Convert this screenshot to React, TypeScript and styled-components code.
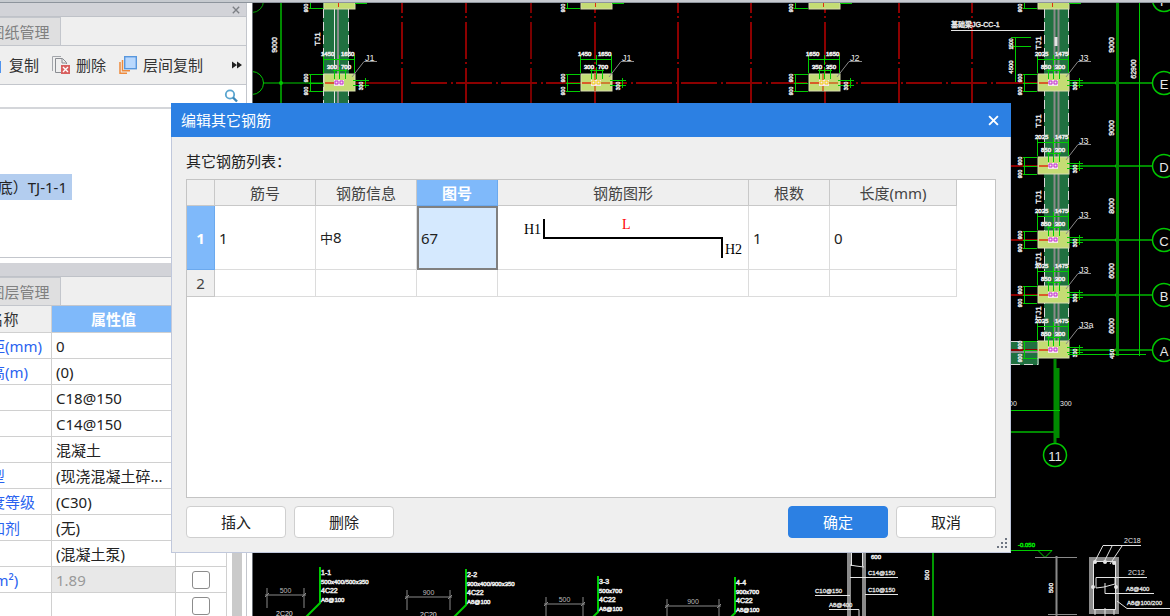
import React from "react";
import styled, { createGlobalStyle } from "styled-components";

const GlobalStyle = createGlobalStyle`
  *, *::before, *::after { box-sizing: border-box; }
  body {
    margin: 0;
    background: #000;
    color: #222;
    font-family: "Noto Sans", "Noto Sans CJK SC", sans-serif;
    font-size: 15px;
    line-height: 20px;
  }
  button, input { font: inherit; color: inherit; }
`;

/* ---------- page frame ---------- */

const Page = styled.div`
  position: relative;
  display: flex;
  flex-direction: column;
  height: 100vh;
  min-height: 560px;
  overflow: hidden;
`;

const TopEdge = styled.div`
  flex: none;
  height: 3px;
  background: #c6cacf;
  border-bottom: 1px solid #8d949c;
`;

const Workspace = styled.div`
  flex: 1;
  display: flex;
  min-height: 0;
`;

const Sidebar = styled.aside`
  flex: none;
  width: 253px;
  padding-right: 5px;
  background: #fff;
  border-right: 1px solid #6b6f75;
  display: flex;
  flex-direction: column;
  overflow: hidden;
`;

const CanvasArea = styled.main`
  flex: 1;
  min-width: 0;
  background: #000;
`;

/* ---------- side panels ---------- */

const Panel = styled.section<{ $fill?: boolean }>`
  display: flex;
  flex-direction: column;
  flex: ${(p) => (p.$fill ? "1" : "none")};
  min-height: 0;
  border-right: 1px solid #c3c6cc;
  overflow: hidden;
`;

const PanelTitle = styled.div`
  flex: none;
  height: 14px;
  display: flex;
  align-items: center;
  justify-content: flex-end;
  padding-right: 6px;
  background: #d2d3d8;
  border-bottom: 1px solid #bfc2c8;
`;

const PlainButton = styled.button`
  display: flex;
  align-items: center;
  padding: 0;
  border: 0;
  background: none;
`;

const TabRow = styled.div`
  flex: none;
  height: 29px;
  background: #efefef;
  border-bottom: 1px solid #c3c6cc;
`;

const Tab = styled.button`
  display: block;
  width: 82px;
  height: 28px;
  margin-left: -21px;
  padding: 0;
  border: 1px solid #c3c6cc;
  border-width: 1px 1px 0 0;
  background: #dfdfe0;
  color: #808080;
`;

const ToolRow = styled.div`
  flex: none;
  height: 39px;
  display: flex;
  align-items: center;
  background: #efefef;
  border-bottom: 1px solid #c3c6cc;
`;

const Tool = styled(PlainButton)`
  gap: 6px;
  margin-right: 13px;
  color: #333;
  white-space: nowrap;
`;

const CopyTool = styled(Tool)`
  margin-left: -15px;
`;

const MoreTool = styled(PlainButton)`
  margin-left: auto;
  padding-right: 4px;
`;

const SearchRow = styled.label`
  flex: none;
  height: 24px;
  display: flex;
  align-items: center;
  padding-right: 8px;
  border-bottom: 2px solid #d4d6da;
`;

const SearchInput = styled.input`
  flex: 1;
  min-width: 0;
  height: 20px;
  border: 0;
  outline: 0;
  background: none;
`;

const Tree = styled.div`
  height: 149px;
  padding-top: 65px;
  border-bottom: 1px solid #c3c6cc;
`;

const TreeItem = styled.button`
  display: flex;
  justify-content: flex-end;
  width: 72px;
  height: 26px;
  padding: 3px 5px;
  border: 0;
  background: #b3cdef;
  white-space: nowrap;
  overflow: hidden;
`;

const PanelGap = styled.div`
  flex: none;
  height: 5px;
  background: #fff;
  border-right: 1px solid #c3c6cc;
`;

const PropertyArea = styled.div`
  flex: 1;
  min-height: 0;
  display: flex;
  justify-content: space-between;
  overflow: hidden;
`;

const PropertyTable = styled.table`
  flex: none;
  align-self: flex-start;
  width: 301px;
  margin-left: -74px;
  table-layout: fixed;
  border-collapse: separate;
  border-spacing: 0;
`;

const PropHead = styled.th<{ $active?: boolean }>`
  height: 27px;
  padding: 0;
  border: 1px solid #d0d0d0;
  border-width: 0 1px 1px 0;
  font-weight: ${(p) => (p.$active ? 700 : 400)};
  color: ${(p) => (p.$active ? "#fff" : "#333")};
  background: ${(p) => (p.$active ? "#7fb9fa" : "#efefef")};
`;

const PropCell = styled.td<{ $tone?: "name" | "muted" }>`
  height: 26px;
  padding: 0 4px;
  border: 1px solid #d0d0d0;
  border-width: 0 1px 1px 0;
  white-space: nowrap;
  overflow: hidden;
  text-overflow: ellipsis;
  color: ${(p) => (p.$tone === "name" ? "#2a63f0" : p.$tone === "muted" ? "#999" : "#222")};
  background: ${(p) => (p.$tone === "muted" ? "#e8e8e8" : "#fff")};
`;

const CheckCell = styled(PropCell)`
  text-align: center;
`;

const Tick = styled.input`
  appearance: none;
  display: block;
  width: 18px;
  height: 18px;
  margin: 0 auto;
  border: 1px solid #8c8c8c;
  border-radius: 3px;
  background: #fff;
`;

const ScrollTrack = styled.div`
  width: 10px;
  margin-right: 4px;
  background: #cacaca;
`;

/* ---------- dialog ---------- */

const Dialog = styled.section`
  position: absolute;
  top: 103px;
  left: 171px;
  right: 159px;
  background: #efefef;
`;

const DialogTitle = styled.header`
  height: 34px;
  display: flex;
  align-items: center;
  justify-content: space-between;
  padding: 0 12px 0 10px;
  background: #2c80e3;
  color: #fff;
`;

const TitleText = styled.h1`
  margin: 0;
  font-size: 15px;
  font-weight: 400;
`;

const DialogBody = styled.div`
  padding: 14px;
  border: 1px solid #c0c8dc;
  border-top: 0;
`;

const ListLabel = styled.h2`
  margin: 0 0 8px;
  font-size: 15px;
  font-weight: 400;
`;

const GridFrame = styled.div`
  min-height: 319px;
  padding-right: 38px;
  background: #fff;
  border: 1px solid #c4c4c4;
`;

const Grid = styled.table`
  width: 100%;
  table-layout: fixed;
  border-collapse: separate;
  border-spacing: 0;
`;

const HeadCell = styled.th<{ $active?: boolean }>`
  height: 26px;
  padding: 0;
  border: 1px solid ${(p) => (p.$active ? "#6ba9ee" : "#c8c8c8")};
  border-width: 0 1px 1px 0;
  font-weight: ${(p) => (p.$active ? 700 : 400)};
  color: ${(p) => (p.$active ? "#fff" : "#444")};
  background: ${(p) => (p.$active ? "#7fb9fa" : "#efefef")};
`;

const Row = styled.tr<{ $tall?: boolean }>`
  height: ${(p) => (p.$tall ? 64 : 27)}px;
`;

const Cell = styled.td<{ $selected?: boolean }>`
  padding: 0 4px;
  border: 1px solid #dcdcdc;
  border-width: 0 1px 1px 0;
  ${(p) => p.$selected && "background: #d5e9fe; outline: 2px solid #808080; outline-offset: -2px;"}
`;

const ShapeCell = styled(Cell)`
  padding: 0;
`;

const BarGrade = styled.span`
  font-size: 13px;
`;

const Shape = styled.svg`
  display: block;
  width: 100%;
  height: 63px;
  font-family: "Liberation Serif", serif;
  font-size: 14px;
`;

const Footer = styled.footer`
  display: flex;
  gap: 8px;
  margin-top: 8px;
`;

const Action = styled.button<{ $primary?: boolean; $push?: boolean }>`
  width: 100px;
  height: 32px;
  padding: 0;
  margin-left: ${(p) => (p.$push ? "auto" : "0")};
  border: 1px solid ${(p) => (p.$primary ? "#2c80e3" : "#cfcfcf")};
  border-radius: 4px;
  background: ${(p) => (p.$primary ? "#2c80e3" : "#fff")};
  color: ${(p) => (p.$primary ? "#fff" : "#222")};
`;

const Grip = styled.svg`
  position: absolute;
  right: 3px;
  bottom: 3px;
`;

/* ---------- CAD drawing ---------- */

const Drawing = styled.svg`
  display: block;
  width: 100%;
  height: 100%;
  fill: none;
  font-family: "Liberation Sans Narrow", "Liberation Sans", "Noto Sans CJK SC", sans-serif;
`;

const Label = styled.text<{ $size?: number; $color?: string }>`
  fill: ${(p) => p.$color ?? "#e8e8e8"};
  font-size: ${(p) => p.$size ?? 6}px;
`;

const Green = styled.path<{ $dark?: boolean; $w?: number }>`
  stroke: ${(p) => (p.$dark ? "#008a00" : "#00cc00")};
  stroke-width: ${(p) => p.$w ?? 1};
`;

const White = styled.path<{ $w?: number; $dim?: boolean }>`
  stroke: ${(p) => (p.$dim ? "#8a8a8a" : "#e4e4e4")};
  stroke-width: ${(p) => p.$w ?? 1};
`;

const Axis = styled.path<{ $bright?: boolean }>`
  stroke: ${(p) => (p.$bright ? "#f00000" : "#8c0000")};
  stroke-width: ${(p) => (p.$bright ? 1 : 2)};
`;

function Turned({ x, y, children, size = 7 }: { x: number; y: number; children: string; size?: number }) {
  return (
    <Label $size={size} x={x} y={y} textAnchor="middle" stroke="#e8e8e8" strokeWidth="0.4" transform={`rotate(-90 ${x} ${y})`}>
      {children}
    </Label>
  );
}

type FootingProps = {
  x: number;
  y: number;
  name: string;
  spans: [string, string];
  inner: [string, string];
  core?: "purple" | "yellow";
};

function Footing({ x, y, name, spans, inner, core = "purple" }: FootingProps) {
  const side = core === "purple" ? "#c02ad0" : "#f2d000";
  return (
    <g>
      <rect x={x - 15} y={y - 9} width="31" height="17" fill="#c4dc74" stroke="#d8dcb0" />
      {core === "yellow" && <path d={`M${x - 1} ${y - 9}v17M${x + 4} ${y}h10`} stroke="#d06020" strokeWidth="1.5" />}
      <path d={`M${x - 14} ${y}h14`} stroke="#e03010" strokeWidth="1.5" />
      <rect x={x - 5} y={y - 3} width="10" height="6" fill="#f6e4ec" />
      <path d={`M${x - 4} ${y - 2}h3v3h-3zM${x + 1} ${y - 2}h3v3h-3z`} stroke={side} />
      <Green d={`M${x - 28.5} ${y - 9}v17M${x - 30} ${y - 8.5}h14M${x - 30} ${y + 0.5}h14M${x - 30} ${y + 8.5}h14`} />
      <Green d={`M${x - 15.5} ${y - 28}v18M${x + 0.5} ${y - 28}v10M${x + 15.5} ${y - 28}v18M${x - 15.5} ${y - 23.5}h31`} />
      <Green d={`M${x - 4.5} ${y - 14}v10M${x + 0.5} ${y - 16}v12M${x + 6.5} ${y - 14}v10M${x - 6} ${y - 12.5}h14`} />
      <Green d={`M${x + 14} ${y - 2.5}h16M${x + 14} ${y + 2.5}h16M${x + 26.5} ${y - 5}v10`} />
      <White $dim d={`M${x + 13} ${y - 6}l12 -15.5h13`} />
      <Label x={x - 18} y={y - 27} stroke="#e8e8e8" strokeWidth="0.6">{spans[0]}</Label>
      <Label x={x + 2} y={y - 27} stroke="#e8e8e8" strokeWidth="0.6">{spans[1]}</Label>
      <Label x={x - 12} y={y - 14} stroke="#e8e8e8" strokeWidth="0.6">{inner[0]}</Label>
      <Label x={x + 2} y={y - 14} stroke="#e8e8e8" strokeWidth="0.6">{inner[1]}</Label>
      <Turned x={x - 31} y={y - 5} size={5}>900</Turned>
      <Turned x={x - 31} y={y + 8} size={5}>900</Turned>
      <Turned x={x + 24} y={y + 3} size={5}>300</Turned>
      <Label $size={9} x={x + 26} y={y - 22}>{name}</Label>
    </g>
  );
}

function TopFooting({ x }: { x: number }) {
  return (
    <g>
      <rect x={x - 15} y="-6" width="31" height="15" fill="#c4dc74" stroke="#d8dcb0" />
      <path d={`M${x - 0.5} 3v4`} stroke="#e03010" />
      <Green d={`M${x - 28.5} 3v5.500M${x - 30} 8.500h14M${x + 16} 3.500h12`} />
      <Turned x={x - 31} y={8} size={5}>900</Turned>
    </g>
  );
}

function Bubble({ x, y, name }: { x: number; y: number; name: string }) {
  return (
    <g>
      <circle cx={x} cy={y} r="11.500" stroke="#00c800" strokeWidth="1.500" />
      <Label $size={13} x={x} y={y + 6} textAnchor="middle">{name}</Label>
    </g>
  );
}

function Section({ x, y, lines }: { x: number; y: number; lines: string[] }) {
  return (
    <g>
      <Green $w={2} d={`M${x} ${y}v36l-14 14`} />
      {lines.map((t, i) => (
        <Label key={i} $size={i % 2 === 0 ? 7 : 6} x={x + 1} y={y + 8 + i * 9} stroke="#e8e8e8" strokeWidth="0.5">{t}</Label>
      ))}
    </g>
  );
}

function Span({ x, y, width, text }: { x: number; y: number; width: number; text: string }) {
  return (
    <g>
      <White $dim d={`M${x - 2} ${y}h${width + 4}M${x} ${y - 7}v20M${x + width} ${y - 7}v20M${x - 2} ${y + 2}l4 -4M${x + width - 2} ${y + 2}l4 -4`} />
      <Label $size={7} $color="#bbb" x={x + width / 2} y={y - 2} textAnchor="middle">{text}</Label>
    </g>
  );
}

const axisLines = [402, 466, 531, 595, 678, 751, 825, 899, 972];
const gridRows = [
  { y: 83, name: "E" },
  { y: 166, name: "D" },
  { y: 240, name: "C" },
  { y: 295, name: "B" },
  { y: 350, name: "A" },
];

function CadDrawing() {
  return (
    <Drawing viewBox="253 3 917 613" preserveAspectRatio="xMinYMin slice" role="img" aria-label="CAD">
      {axisLines.map((x) => (
        <Axis key={x} $bright={x === 531} d={`M${x} -24V130`} strokeDasharray="37 3 2 4" />
      ))}
      <Axis d="M411 83H1040" strokeDasharray="36 4 2 3" />
      <Axis $bright d="M356 83H400" />

      {/* left axis and foundation strip */}
      <Green $dark $w={2} d="M281 3V110" />
      <Green d="M263 83H340" />
      <circle cx="281" cy="83" r="2" fill="#00c800" />
      <circle cx="252" cy="1" r="11.500" stroke="#00a000" />
      <circle cx="252" cy="83" r="11.500" stroke="#00c800" />
      <Turned x={277} y={45}>9000</Turned>
      <rect x="323" y="3" width="26" height="110" fill="#207040" />
      <path d="M323.500 9V110M348.500 9V110" stroke="#d8d8d8" strokeDasharray="9 4" />
      <White d="M334.500 3V110" />
      <White $dim $w={2} d="M338 3V110" />
      <Turned x={320} y={39} size={8}>TJ1</Turned>
      <TopFooting x={339} />
      <TopFooting x={596} />
      <TopFooting x={824} />
      <Footing x={339} y={83} name="J1" spans={["1450", "1650"]} inner={["300", "700"]} />
      <Footing x={596} y={83} name="J1" spans={["1450", "1650"]} inner={["300", "700"]} core="yellow" />
      <Footing x={824} y={83} name="J2" spans={["1650", "1650"]} inner={["350", "350"]} core="yellow" />

      <Label $size={7} x="951" y="27" stroke="#e8e8e8" strokeWidth="0.400">基础梁JG-CC-1</Label>
      <White d="M951 30.500H1044L1055 41" />

      {/* right foundation strip */}
      <rect x="1044" y="3" width="25" height="340" fill="#207040" />
      <path d="M1044.500 9V342M1068.500 9V342" stroke="#d8d8d8" strokeDasharray="9 4" />
      <rect x="1011" y="341" width="28" height="24" fill="#207040" />
      <path d="M1011 341.500H1038M1011 364.500H1038V358" stroke="#d8d8d8" strokeDasharray="9 4" />
      <White $dim $w={2} d="M1054.500 3V350M1058.500 3V350M1011 352H1040" />
      <White $w={3} d="M1056 37v9" />
      <Green d="M1015.500 37V83M1011 37.500h20M1011 46.500h20" />
      <Turned x={1013} y={44} size={5}>1500</Turned>
      <Turned x={1013} y={67} size={6}>4500</Turned>
      <TopFooting x={1053} />
      {gridRows.map((r) => (
        <g key={r.name}>
          <Green $w={2} $dark d={`M1069 ${r.y}H1152`} />
          <Axis d={`M1011 ${r.y}h30`} />
          <Footing x={1053} y={r.y} name={r.name === "A" ? "J3a" : "J3"} spans={["2025", "1475"]} inner={["850", "300"]} />
          <Bubble x={1164} y={r.y} name={r.name} />
          <circle cx="1117" cy={r.y} r="2" fill="#00c800" />
        </g>
      ))}
      <Bubble x={1164} y={0} name="F" />
      {[43, 121, 197, 259, 313].map((y) => (
        <Turned key={y} x={1041} y={y} size={8}>TJ1</Turned>
      ))}
      <Green $dark $w={3} d="M1117.500 3V356" />
      <Green d="M1139.500 3V356M1068 354.500H1146" />
      <Turned x={1114} y={45}>9000</Turned>
      <Turned x={1136} y={69}>62900</Turned>
      <Turned x={1114} y={128}>9000</Turned>
      <Turned x={1114} y={206}>8000</Turned>
      <Turned x={1114} y={271}>6000</Turned>
      <Turned x={1114} y={326}>6000</Turned>
      <Turned x={1114} y={354} size={6}>450</Turned>

      {/* axis 11 */}
      <Green $dark $w={3} d="M1055 359V444M1058 368V438" />
      <Green d="M1011 410.500H1060" />
      <Green $dark $w={2} d="M1011 432H1058" />
      <Label $size={7} x="1060" y="406">300</Label>
      <Label $size={7} x="1009" y="406">00</Label>
      <Bubble x={1055} y={455} name="11" />

      {/* cross sections along the bottom */}
      <Span x={267} y={595} width={37} text="500" />
      <Label $size={7} x="276" y="616">2C20</Label>
      <Section x={320} y={567} lines={["1-1", "500x400/500x350", "4C22", "A8@100"]} />
      <Span x={407} y={597} width={43} text="900" />
      <Label $size={7} x="420" y="617">2C20</Label>
      <Section x={466} y={569} lines={["2-2", "900x400/900x350", "4C22", "A8@100"]} />
      <Span x={546} y={604} width={37} text="500" />
      <Section x={598} y={576} lines={["3-3", "500x700", "4C22", "A8@100"]} />
      <Span x={667} y={606} width={52} text="900" />
      <Section x={735} y={577} lines={["4-4", "900x700", "4C22", "A8@100"]} />

      {/* column section */}
      <White $dim $w={4} d="M849 540V616M864 540V616" />
      <White d="M851.500 540V566M862.500 540V566M850 565l6 1l8 1M850 577.500H898M865 594.500H898M815 595.500H850M829 609.500H859V616" />
      <Label $size={6} x="871" y="559" stroke="#e8e8e8" strokeWidth="0.500">600</Label>
      <Label $size={6} x="868" y="575" stroke="#e8e8e8" strokeWidth="0.300">C14@150</Label>
      <Label $size={6} x="868" y="592" stroke="#e8e8e8" strokeWidth="0.300">C10@150</Label>
      <Label $size={6} x="815" y="593" stroke="#e8e8e8" strokeWidth="0.300">C10@150</Label>
      <Label $size={6} x="829" y="607" stroke="#e8e8e8" strokeWidth="0.300">A8@400</Label>
      <Green $w={1.5} d="M933 540V616" />
      <Turned x={929} y={575} size={6}>500</Turned>

      {/* elevation mark and beam section */}
      <Label $size={6} $color="#00e000" x="1018" y="547" stroke="#00e000" strokeWidth="0.500">-0.050</Label>
      <Green d="M1011 550.500H1052M1038 550.500l7 7l7 -7" />
      <White $dim d="M1035 557.500H1077M1048 614.500H1077" />
      <White $dim $w={2} d="M1056.500 556V616" />
      <Turned x={1053} y={588} size={6}>500</Turned>
      <path d="M1091 559H1117V612H1091Z" stroke="#8a8a8a" strokeWidth="4" />
      <path d="M1093.500 561.500H1115.500V609.500H1093.500Z" stroke="#e4e4e4" />
      <White d="M1141 545.500H1103L1094 563M1112 546L1104 562M1122 546L1110 564M1147 577.500H1096V588L1104 587L1115 584V578M1154 593.500H1105V583M1170 608.500H1127L1117 601M1095 609v6M1105 608v8M1114 609v6" />
      <circle cx="1095" cy="562" r="2" fill="#e4e4e4" />
      <circle cx="1105" cy="562" r="2" fill="#e4e4e4" />
      <circle cx="1114" cy="563" r="2" fill="#e4e4e4" />
      <circle cx="1093" cy="587" r="2" fill="#e4e4e4" />
      <circle cx="1116" cy="587" r="2" fill="#e4e4e4" />
      <Label $size={7} x="1124" y="543">2C18</Label>
      <Label $size={7} x="1128" y="575">2C12</Label>
      <Label $size={6} x="1126" y="591" stroke="#e8e8e8" strokeWidth="0.300">A8@400</Label>
      <Label $size={6} x="1127" y="605" stroke="#e8e8e8" strokeWidth="0.300">A8@100/200</Label>
    </Drawing>
  );
}

/* ---------- icons ---------- */

function CopyIcon() {
  return (
    <svg width="18" height="18" viewBox="0 0 18 18" fill="#4f93ee">
      <path d="M3 1h10v11H3z" fill="#b8d6fb" />
      <path d="M8 5h8v12H8z" />
    </svg>
  );
}

function DeleteIcon() {
  return (
    <svg width="18" height="18" viewBox="0 0 18 18" fill="none">
      <path d="M.5 15V.5H9" stroke="#a4a7ac" />
      <path d="M9 16.500H3.500V2.500H10.500L14.500 6.500V8" stroke="#8a8d92" />
      <path d="M10 3v4h4" stroke="#8a8d92" />
      <rect x="9" y="9" width="9" height="9" fill="#d8605f" />
      <path d="M11 11l5 5M16 11l-5 5" stroke="#fff" strokeWidth="1.400" />
    </svg>
  );
}

function LayerCopyIcon() {
  return (
    <svg width="18" height="18" viewBox="0 0 18 18" fill="none">
      <path d="M1 6v11.300h7" stroke="#ee8a3c" strokeWidth="1.500" />
      <path d="M3.500 4v10.800H11" stroke="#ee8a3c" strokeWidth="1.500" />
      <rect x="5.700" y=".7" width="11.600" height="12" fill="#b9d8fd" stroke="#5897dd" strokeWidth="1.400" />
    </svg>
  );
}

function MoreIcon() {
  return (
    <svg width="10" height="8" viewBox="0 0 10 8" fill="#222">
      <path d="M0 0.500l5 3.500l-5 3.500zM5 0.500l5 3.500l-5 3.500z" />
    </svg>
  );
}

function SearchIcon() {
  return (
    <svg width="14" height="14" viewBox="0 0 14 14" fill="none">
      <circle cx="6" cy="5.500" r="4.200" stroke="#5aa5cf" strokeWidth="1.800" />
      <path d="M9 8.500l4 4" stroke="#3c87b8" strokeWidth="2.400" />
    </svg>
  );
}

function CloseIcon({ color, size }: { color: string; size: number }) {
  return (
    <svg width={size} height={size} viewBox="0 0 10 10">
      <path d="M1 1l8 8M9 1l-8 8" stroke={color} strokeWidth="1.700" />
    </svg>
  );
}

/* ---------- data ---------- */

type Property = { name: string; value: string; muted?: boolean; tick?: boolean };

const properties: Property[] = [
  { name: "相对偏心距(mm)", value: "0" },
  { name: "相对底标高(m)", value: "(0)" },
  { name: "", value: "C18@150" },
  { name: "", value: "C14@150" },
  { name: "", value: "混凝土" },
  { name: "混凝土类型", value: "(现浇混凝土碎..." },
  { name: "混凝土强度等级", value: "(C30)" },
  { name: "混凝土外加剂", value: "(无)" },
  { name: "", value: "(混凝土泵)" },
  { name: "截面面积(m²)", value: "1.89", muted: true, tick: true },
  { name: "", value: "", tick: true },
];

export default function App() {
  return (
    <Page lang="zh-CN">
      <GlobalStyle />
      <TopEdge />
      <Workspace>
        <Sidebar>
          <Panel>
            <PanelTitle>
              <PlainButton aria-label="关闭面板">
                <CloseIcon color="#7c7f84" size={8} />
              </PlainButton>
            </PanelTitle>
            <TabRow>
              <Tab>图纸管理</Tab>
            </TabRow>
            <ToolRow>
              <CopyTool><CopyIcon />复制</CopyTool>
              <Tool><DeleteIcon />删除</Tool>
              <Tool><LayerCopyIcon />层间复制</Tool>
              <MoreTool aria-label="更多"><MoreIcon /></MoreTool>
            </ToolRow>
            <SearchRow>
              <SearchInput type="text" aria-label="搜索" />
              <SearchIcon />
            </SearchRow>
            <Tree>
              <TreeItem>（底）TJ-1-1</TreeItem>
            </Tree>
          </Panel>
          <PanelGap />
          <Panel $fill>
            <PanelTitle />
            <TabRow>
              <Tab>图层管理</Tab>
            </TabRow>
            <PropertyArea>
              <PropertyTable>
                <colgroup>
                  <col width="126" />
                  <col width="124" />
                  <col width="51" />
                </colgroup>
                <thead>
                  <tr>
                    <PropHead>属性名称</PropHead>
                    <PropHead $active>属性值</PropHead>
                    <PropHead />
                  </tr>
                </thead>
                <tbody>
                  {properties.map((p, i) => (
                    <tr key={i}>
                      <PropCell $tone="name">{p.name}</PropCell>
                      <PropCell $tone={p.muted ? "muted" : undefined}>{p.value}</PropCell>
                      <CheckCell>
                        {p.tick && <Tick type="checkbox" aria-label={p.name || "附加"} />}
                      </CheckCell>
                    </tr>
                  ))}
                </tbody>
              </PropertyTable>
              <ScrollTrack />
            </PropertyArea>
          </Panel>
        </Sidebar>
        <CanvasArea>
          <CadDrawing />
        </CanvasArea>
      </Workspace>

      <Dialog role="dialog" aria-labelledby="dialog-title">
        <DialogTitle>
          <TitleText id="dialog-title">编辑其它钢筋</TitleText>
          <PlainButton aria-label="关闭">
            <CloseIcon color="#fff" size={11} />
          </PlainButton>
        </DialogTitle>
        <DialogBody>
          <ListLabel>其它钢筋列表：</ListLabel>
          <GridFrame>
            <Grid>
              <colgroup>
                <col width="28" />
                <col width="101" />
                <col width="101" />
                <col width="81" />
                <col />
                <col width="81" />
                <col width="127" />
              </colgroup>
              <thead>
                <tr>
                  <HeadCell />
                  <HeadCell>筋号</HeadCell>
                  <HeadCell>钢筋信息</HeadCell>
                  <HeadCell $active>图号</HeadCell>
                  <HeadCell>钢筋图形</HeadCell>
                  <HeadCell>根数</HeadCell>
                  <HeadCell>长度(mm)</HeadCell>
                </tr>
              </thead>
              <tbody>
                <Row $tall>
                  <HeadCell as="th" scope="row" $active>1</HeadCell>
                  <Cell>1</Cell>
                  <Cell><BarGrade>中</BarGrade>8</Cell>
                  <Cell $selected>67</Cell>
                  <ShapeCell>
                    <Shape viewBox="0 0 250 63">
                      <path d="M46 13V32H224V52" fill="none" stroke="#000" strokeWidth="2" />
                      <text x="26" y="28">H1</text>
                      <text x="124" y="23" fill="#f00">L</text>
                      <text x="227" y="48">H2</text>
                    </Shape>
                  </ShapeCell>
                  <Cell>1</Cell>
                  <Cell>0</Cell>
                </Row>
                <Row>
                  <HeadCell as="th" scope="row">2</HeadCell>
                  <Cell /><Cell /><Cell /><Cell /><Cell /><Cell />
                </Row>
              </tbody>
            </Grid>
          </GridFrame>
          <Footer>
            <Action>插入</Action>
            <Action>删除</Action>
            <Action $primary $push>确定</Action>
            <Action>取消</Action>
          </Footer>
        </DialogBody>
        <Grip width="12" height="12" viewBox="0 0 12 12" fill="#6f7682">
          <path d="M9 0h2v2h-2zM9 4h2v2h-2zM5 4h2v2h-2zM9 8h2v2h-2zM5 8h2v2h-2zM1 8h2v2h-2z" />
        </Grip>
      </Dialog>
    </Page>
  );
}
